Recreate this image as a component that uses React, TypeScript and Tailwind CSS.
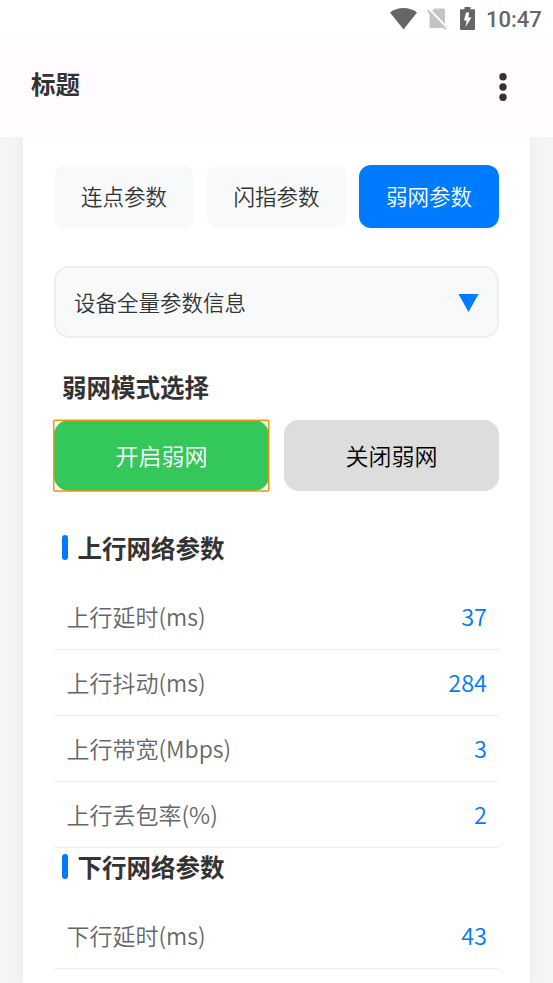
import { clsx } from 'clsx';

interface Param {
  label: string;
  value: number;
}

const tabs = ['连点参数', '闪指参数', '弱网参数'];

const uplink: Param[] = [
  { label: '上行延时(ms)', value: 37 },
  { label: '上行抖动(ms)', value: 284 },
  { label: '上行带宽(Mbps)', value: 3 },
  { label: '上行丢包率(%)', value: 2 },
];

const downlink: Param[] = [{ label: '下行延时(ms)', value: 43 }];

function StatusBar() {
  return (
    <div className="flex h-[37px] shrink-0 items-center bg-white pl-[390px] text-[#666666]">
      <svg width="27" height="22" viewBox="0 0 27 22" fill="currentColor">
        <path d="M0 4.5C3.600 1.500 8.200 0 13.500 0S23.400 1.500 27 4.500L13.500 21.500Z" />
      </svg>
      <svg className="ml-[10px]" width="20" height="22" viewBox="0 0 20 22">
        <path d="M7.500 0.500H16.500Q18 0.500 18 2V18.500Q18 20 16.500 20H4Q2.500 20 2.500 18.500V5.500Z" fill="#c4c4c4" />
        <path d="M2.300 1.300L21 20.500" stroke="#fff" strokeWidth="2" />
        <path d="M0.400 2.200L18.800 21.300" stroke="#c4c4c4" strokeWidth="1.800" />
      </svg>
      <svg className="ml-[13px]" width="15" height="23" viewBox="0 0 15 23">
        <path d="M4.500 0H10.500V2.300H14Q15 2.300 15 3.300V22Q15 23 14 23H1Q0 23 0 22V3.300Q0 2.300 1 2.300H4.500Z" fill="currentColor" />
        <path d="M9 5.500H6L4 13.500H6.700L5.500 20L11.500 10.500H8.500Z" fill="#fff" />
      </svg>
      <span className="mt-[3px] ml-[11px] font-[Roboto] text-[22px] leading-none font-medium">10:47</span>
    </div>
  );
}

function Header() {
  return (
    <header className="z-10 flex h-[100px] shrink-0 items-center justify-between bg-[#fffbff] pr-[46px] pl-[31px]">
      <h1 className="-mt-[5px] text-[24.5px] font-bold">标题</h1>
      <svg width="8" height="28" viewBox="0 0 8 28" fill="#333">
        <circle cx="4" cy="3.800" r="3.700" />
        <circle cx="4" cy="14" r="3.700" />
        <circle cx="4" cy="24.300" r="3.700" />
      </svg>
    </header>
  );
}

function ParamSection({ title, params }: { title: string; params: Param[] }) {
  return (
    <section>
      <div className="flex h-[38px] items-center pl-[7.5px]">
        <span className="mr-[9.5px] h-[25px] w-[6.5px] rounded-full bg-[#007aff]" />
        <h2 className="pt-[2px] text-[24.5px] font-bold">{title}</h2>
      </div>
      <div className="pt-[17px]">
        {params.map((param) => (
          <div
            key={param.label}
            className="flex h-[66px] items-center justify-between border-b border-[#eeeeee] pr-3 pl-[12.5px] text-[23px]"
          >
            <span className="text-[#666666]">{param.label}</span>
            <span className="pt-[2px] text-[23.5px] text-[#007aff]">{param.value}</span>
          </div>
        ))}
      </div>
    </section>
  );
}

export default function App() {
  return (
    <div className="flex h-[983px] w-[553px] flex-col overflow-hidden bg-[#f5f5f5] font-['Noto_Sans_CJK_SC',sans-serif] leading-none font-[350] text-[#333333]">
      <StatusBar />
      <Header />
      <main className="mx-[23px] grow bg-white px-[31px] pt-7 shadow-[0_0_18px_rgba(0,0,0,0.06)]">
        <div className="grid grid-cols-3 gap-[12.5px]">
          {tabs.map((tab) => (
            <button
              key={tab}
              className={clsx(
                'h-[63px] rounded-[12px] pb-px text-[21.5px]',
                tab === '弱网参数' ? 'bg-[#007aff] text-white' : 'bg-[#f8f9fb]',
              )}
            >
              {tab}
            </button>
          ))}
        </div>

        <div className="mt-[38px] flex h-[72px] items-center justify-between rounded-[15px] border-2 border-[#eeeeee] bg-[#f8f9fb] pr-[18.5px] pl-[18px] text-[21.5px]">
          <span>设备全量参数信息</span>
          <svg className="mt-[2px]" width="20" height="18" viewBox="0 0 20 18" fill="#007aff">
            <path d="M-0.500 0H19.500L9.500 18Z" />
          </svg>
        </div>

        <h2 className="mt-[37px] pl-2 text-[24.5px] font-bold">弱网模式选择</h2>
        <div className="mt-5 grid grid-cols-2 gap-[15px] text-[23px]">
          <div className="relative">
            <button className="h-[71px] w-full rounded-[15px] bg-[#34c759] text-white">开启弱网</button>
            <svg className="absolute -top-px -left-px" width="217" height="73" fill="none" stroke="#ee9800">
              <rect x="0.800" y="1.200" width="215" height="70.800" rx="1" strokeWidth="1.500" />
            </svg>
          </div>
          <button className="h-[71px] rounded-[15px] bg-[#dddddd] text-black">关闭弱网</button>
        </div>

        <div className="mt-[38px]">
          <ParamSection title="上行网络参数" params={uplink} />
          <ParamSection title="下行网络参数" params={downlink} />
        </div>
      </main>
    </div>
  );
}
